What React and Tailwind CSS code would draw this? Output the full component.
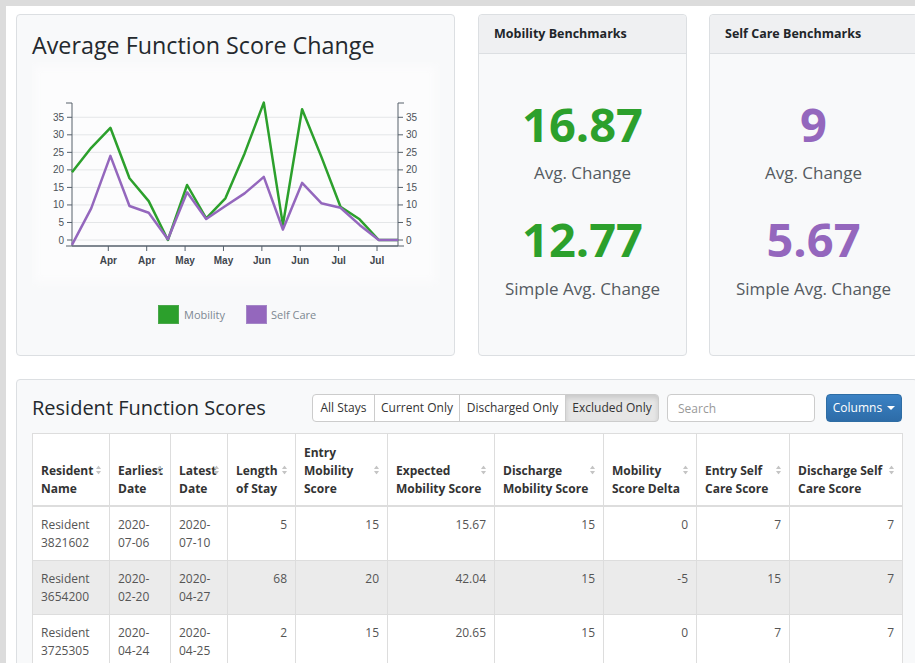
import React from "react";

const GREEN = "#2ca02c";
const PURPLE = "#9467bd";

// monthly averages used for the trend chart
const mobility = [19.3, 26.3, 32, 17.6, 11.1, 0, 15.7, 6.2, 11.9, 24.7, 39.2, 4.3, 37.3, 23.8, 9.5, 5.9, 0, 0];
const selfCare = [-1.4, 9, 24, 9.7, 7.8, 0.2, 13.6, 6, 9.7, 13.3, 18, 3, 16.3, 10.5, 9.2, 4.3, 0, 0];
const monthTicks = ["Apr", "Apr", "May", "May", "Jun", "Jun", "Jul", "Jul"];

const PLOT_L = 40;
const PLOT_R = 366;
const px = (i) => PLOT_L + i * ((PLOT_R - PLOT_L) / 17);
const py = (v) => 178 - 3.506 * v;
const toPath = (arr) =>
  arr.map((v, i) => `${i ? "L" : "M"}${px(i).toFixed(1)},${py(v).toFixed(1)}`).join(" ");

const FunctionChart = () => {
  const yTicks = [0, 5, 10, 15, 20, 25, 30, 35];
  return (
    <svg width="408" height="278" className="block">
      <defs>
        <filter id="soft" x="-5%" y="-5%" width="110%" height="110%">
          <feGaussianBlur stdDeviation="4" />
        </filter>
      </defs>
      <rect x="2" y="4" width="402" height="216" fill="#fcfcfd" filter="url(#soft)" />

      {/* grid */}
      {yTicks.map((t) => (
        <line key={t} x1={PLOT_L} x2={PLOT_R} y1={py(t)} y2={py(t)} stroke="#e4e6e8" strokeWidth="1" />
      ))}

      {/* left axis */}
      <path d={`M34,41 H${PLOT_L} V184 H34`} fill="none" stroke="#56606b" strokeWidth="1" />
      {yTicks.map((t) => (
        <g key={`l${t}`}>
          <line x1="35" x2={PLOT_L} y1={py(t)} y2={py(t)} stroke="#56606b" />
          <text x="32" y={py(t) + 3.5} textAnchor="end" fontSize="10" fill="#4b5259" fontFamily="'Liberation Sans', sans-serif">
            {t}
          </text>
        </g>
      ))}

      {/* right axis */}
      <path d={`M372,41 H${PLOT_R} V184 H372`} fill="none" stroke="#56606b" strokeWidth="1" />
      {yTicks.map((t) => (
        <g key={`r${t}`}>
          <line x1={PLOT_R} x2="371" y1={py(t)} y2={py(t)} stroke="#56606b" />
          <text x="374" y={py(t) + 3.5} fontSize="10" fill="#4b5259" fontFamily="'Liberation Sans', sans-serif">
            {t}
          </text>
        </g>
      ))}

      {/* x axis */}
      <path d={`M${PLOT_L},184 H${PLOT_R}`} fill="none" stroke="#56606b" strokeWidth="1.5" />
      {monthTicks.map((m, k) => {
        const x = 76.3 + k * 38.39;
        return (
          <g key={k}>
            <line x1={x} x2={x} y1="184" y2="189" stroke="#56606b" />
            <text x={x} y="202" textAnchor="middle" fontSize="10" fontWeight="bold" fill="#3f464d" fontFamily="'Liberation Sans', sans-serif">
              {m}
            </text>
          </g>
        );
      })}

      <path d={toPath(mobility)} fill="none" stroke={GREEN} strokeWidth="2.5" strokeLinejoin="round" />
      <path d={toPath(selfCare)} fill="none" stroke={PURPLE} strokeWidth="2.5" strokeLinejoin="round" />

      {/* legend */}
      <rect x="126.5" y="243.5" width="20" height="18" fill={GREEN} stroke="#4aa84a" />
      <text x="152" y="257" fontSize="11" fill="#7d8892" fontFamily="'Open Sans', sans-serif">
        Mobility
      </text>
      <rect x="214.5" y="243.5" width="20" height="18" fill={PURPLE} stroke="#a486c7" />
      <text x="239" y="257" fontSize="11" fill="#7d8892" fontFamily="'Open Sans', sans-serif">
        Self Care
      </text>
    </svg>
  );
};

const BenchmarkCard = ({ title, avg, simple, color, className }) => (
  <div className={`w-[209px] h-[342px] shrink-0 rounded-[4px] border border-[#dcdfe2] bg-[#f8f9fa] flex flex-col ${className}`}>
    <div className="h-[39px] bg-[#eff0f2] border-b border-[#dcdfe2] rounded-t-[4px] px-[15px] pt-[1px] flex items-center text-[12.5px] font-bold text-[#212529]">
      {title}
    </div>
    <div className="flex flex-col items-center pt-[46px]">
      <div className={`text-[47px] leading-[48px] font-bold ${color}`}>{avg}</div>
      <div className="mt-[13px] text-[17px] leading-[24px] text-[#555b61]">Avg. Change</div>
      <div className={`mt-[30px] text-[47px] leading-[48px] font-bold ${color}`}>{simple}</div>
      <div className="mt-[14px] text-[17px] leading-[24px] text-[#555b61]">Simple Avg. Change</div>
    </div>
  </div>
);

const SortIcon = () => (
  <svg width="5" height="9" viewBox="0 0 5 9" className="absolute right-[8px] top-1/2 -translate-y-1/2">
    <path d="M2.5 0 L5 3.5 H0 Z" fill="#c4c4c4" />
    <path d="M2.5 9 L5 5.5 H0 Z" fill="#c4c4c4" />
  </svg>
);

const columns = [
  { label: "Resident Name", w: "w-[77px]" },
  { label: "Earliest Date", w: "w-[61px]" },
  { label: "Latest Date", w: "w-[57px]" },
  { label: "Length of Stay", w: "w-[68px]" },
  { label: "Entry Mobility Score", w: "w-[92px]" },
  { label: "Expected Mobility Score", w: "w-[107px]" },
  { label: "Discharge Mobility Score", w: "w-[109px]" },
  { label: "Mobility Score Delta", w: "w-[93px]" },
  { label: "Entry Self Care Score", w: "w-[93px]" },
  { label: "Discharge Self Care Score", w: "w-[113px]" },
];

const rows = [
  ["Resident 3821602", "2020-07-06", "2020-07-10", 5, 15, "15.67", 15, 0, 7, 7],
  ["Resident 3654200", "2020-02-20", "2020-04-27", 68, 20, "42.04", 15, -5, 15, 7],
  ["Resident 3725305", "2020-04-24", "2020-04-25", 2, 15, "20.65", 15, 0, 7, 7],
];

const filters = [
  { label: "All Stays", w: "w-[63px]" },
  { label: "Current Only", w: "w-[86px]" },
  { label: "Discharged Only", w: "w-[107px]" },
  { label: "Excluded Only", w: "w-[94px]", active: true },
];

export default function App() {
  return (
    <div className="w-[915px] h-[663px] overflow-hidden bg-[#dcdcdc] pt-[6px] pl-[6px] font-['Open_Sans',sans-serif]">
      <div className="w-[1000px] h-full bg-white pt-[8px] pl-[10px]">
        <div className="flex">
          {/* chart card */}
          <div className="w-[439px] h-[342px] shrink-0 rounded-[4px] border border-[#dcdfe2] bg-[#f8f9fa] pt-[16px] pl-[15px]">
            <h2 className="text-[23.3px] leading-[28px] text-[#24292e]">Average Function Score Change</h2>
            <div className="mt-[3px]">
              <FunctionChart />
            </div>
          </div>

          <BenchmarkCard
            title="Mobility Benchmarks"
            avg="16.87"
            simple="12.77"
            color="text-[#2ca02c]"
            className="ml-[23px]"
          />
          <BenchmarkCard
            title="Self Care Benchmarks"
            avg="9"
            simple="5.67"
            color="text-[#9467bd]"
            className="ml-[22px]"
          />
        </div>

        {/* resident table card */}
        <div className="mt-[23px] w-[902px] h-[320px] rounded-[4px] border border-[#dcdfe2] bg-[#f8f9fa] pt-[14px] pl-[15px] pr-[15px]">
          <div className="flex items-center h-[28px]">
            <h2 className="text-[20px] leading-[28px] text-[#24292e]">Resident Function Scores</h2>
            <div className="ml-auto flex h-[28px]">
              {filters.map((f, i) => (
                <button
                  key={f.label}
                  className={`${f.w} h-full flex items-center justify-center text-[12px] text-[#333] border border-[#ccc] ${
                    i > 0 ? "-ml-px" : ""
                  } ${i === 0 ? "rounded-l-[4px]" : ""} ${i === filters.length - 1 ? "rounded-r-[4px]" : ""} ${
                    f.active ? "bg-[#e6e6e6] border-[#adadad] shadow-[inset_0_3px_5px_rgba(0,0,0,0.125)]" : "bg-white"
                  }`}
                >
                  {f.label}
                </button>
              ))}
            </div>
            <input
              placeholder="Search"
              className="ml-[8px] w-[148px] h-[28px] rounded-[4px] border border-[#ccc] bg-white px-[10px] text-[12px] text-[#555] placeholder:text-[#999] outline-none"
            />
            <button className="ml-[11px] w-[76px] h-[28px] rounded-[4px] border border-[#2e6da4] bg-gradient-to-b from-[#3b82c4] to-[#2d6ca8] text-white text-[12px] flex items-center justify-center gap-[5px]">
              Columns
              <span className="w-0 h-0 border-l-[4px] border-r-[4px] border-t-[4px] border-l-transparent border-r-transparent border-t-white" />
            </button>
          </div>

          <table className="mt-[11px] w-[870px] table-fixed border-collapse bg-white text-[12px] leading-[18px]">
            <colgroup>
              {columns.map((c) => (
                <col key={c.label} className={c.w} />
              ))}
            </colgroup>
            <thead>
              <tr>
                {columns.map((c) => (
                  <th
                    key={c.label}
                    className="relative border border-[#ddd] border-b-2 px-[8px] pt-[10px] pb-[7px] align-bottom text-left font-bold text-[#333]"
                  >
                    {c.label}
                    <SortIcon />
                  </th>
                ))}
              </tr>
            </thead>
            <tbody>
              {rows.map((r, ri) => (
                <tr key={ri} className={ri === 1 ? "bg-[#ebebeb]" : "bg-white"}>
                  {r.map((cell, ci) => (
                    <td
                      key={ci}
                      className={`border border-[#ddd] px-[8px] pt-[9px] pb-[8px] align-top text-[#555] ${
                        ci > 2 ? "text-right" : "text-left"
                      }`}
                    >
                      {cell}
                    </td>
                  ))}
                </tr>
              ))}
            </tbody>
          </table>
        </div>
      </div>
    </div>
  );
}
